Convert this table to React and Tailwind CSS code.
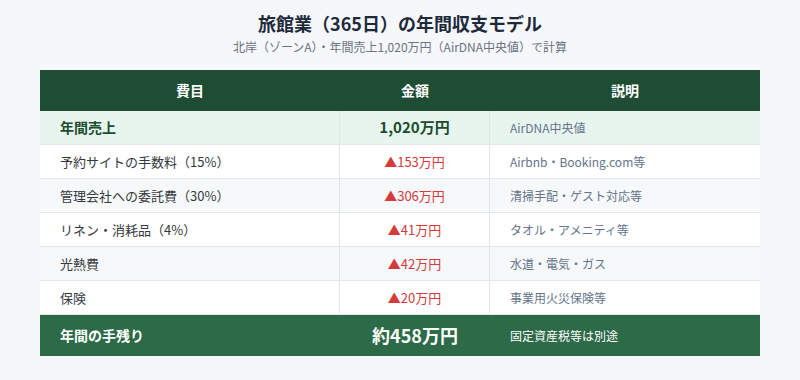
import React from "react";

const rows = [
  { name: "予約サイトの手数料（15%）", amt: "▲153万円", note: "Airbnb・Booking.com等", bg: "bg-white" },
  { name: "管理会社への委託費（30%）", amt: "▲306万円", note: "清掃手配・ゲスト対応等", bg: "bg-[#f7f8fa]" },
  { name: "リネン・消耗品（4%）", amt: "▲41万円", note: "タオル・アメニティ等", bg: "bg-white" },
  { name: "光熱費", amt: "▲42万円", note: "水道・電気・ガス", bg: "bg-[#f7f8fa]" },
  { name: "保険", amt: "▲20万円", note: "事業用火災保険等", bg: "bg-white" },
];

export default function App() {
  return (
    <div
      className="w-[800px] h-[380px] bg-[#f5f7fa] flex flex-col items-center pt-[10px]"
      style={{ fontFamily: '"Noto Sans CJK JP", "Noto Sans", sans-serif' }}
    >
      <h1 className="text-[18px] leading-[26px] font-bold text-[#1e293b]">旅館業（365日）の年間収支モデル</h1>
      <p className="text-[12px] leading-[16px] mt-[3px] text-[#6b7280]">北岸（ゾーンA）・年間売上1,020万円（AirDNA中央値）で計算</p>
      <div className="mt-[15px] w-[720px] flex flex-col">
        <div className="grid grid-cols-[300px_150px_270px] h-[41px] bg-[#1e4d34] text-white font-bold text-[14px] items-center text-center">
          <div>費目</div>
          <div>金額</div>
          <div>説明</div>
        </div>
        <div className="grid grid-cols-[300px_150px_270px] h-[34px] bg-[#e8f5ee] border-b border-[#e5e7eb]">
          <div className="flex items-center pl-[20px] font-bold text-[14px] text-[#1a4d30] border-r border-[#e2e6ea]">年間売上</div>
          <div className="flex items-center justify-center font-bold text-[15px] text-[#1a4d30] border-r border-[#e2e6ea]">1,020万円</div>
          <div className="flex items-center pl-[20px] text-[12px] text-[#64748b]">AirDNA中央値</div>
        </div>
        {rows.map((r) => (
          <div key={r.name} className={`grid grid-cols-[300px_150px_270px] h-[34px] border-b border-[#e5e7eb] ${r.bg}`}>
            <div className="flex items-center pl-[20px] text-[13px] text-[#333840] border-r border-[#e2e6ea]">{r.name}</div>
            <div className="flex items-center justify-center text-[13px] text-[#d63a3a] border-r border-[#e2e6ea]">{r.amt}</div>
            <div className="flex items-center pl-[20px] text-[12px] text-[#64748b]">{r.note}</div>
          </div>
        ))}
        <div className="grid grid-cols-[300px_150px_270px] h-[41px] bg-[#2c6a48] text-white items-center">
          <div className="pl-[20px] font-bold text-[14px]">年間の手残り</div>
          <div className="text-center font-bold text-[18px]">約458万円</div>
          <div className="pl-[20px] text-[12px]">固定資産税等は別途</div>
        </div>
      </div>
    </div>
  );
}
